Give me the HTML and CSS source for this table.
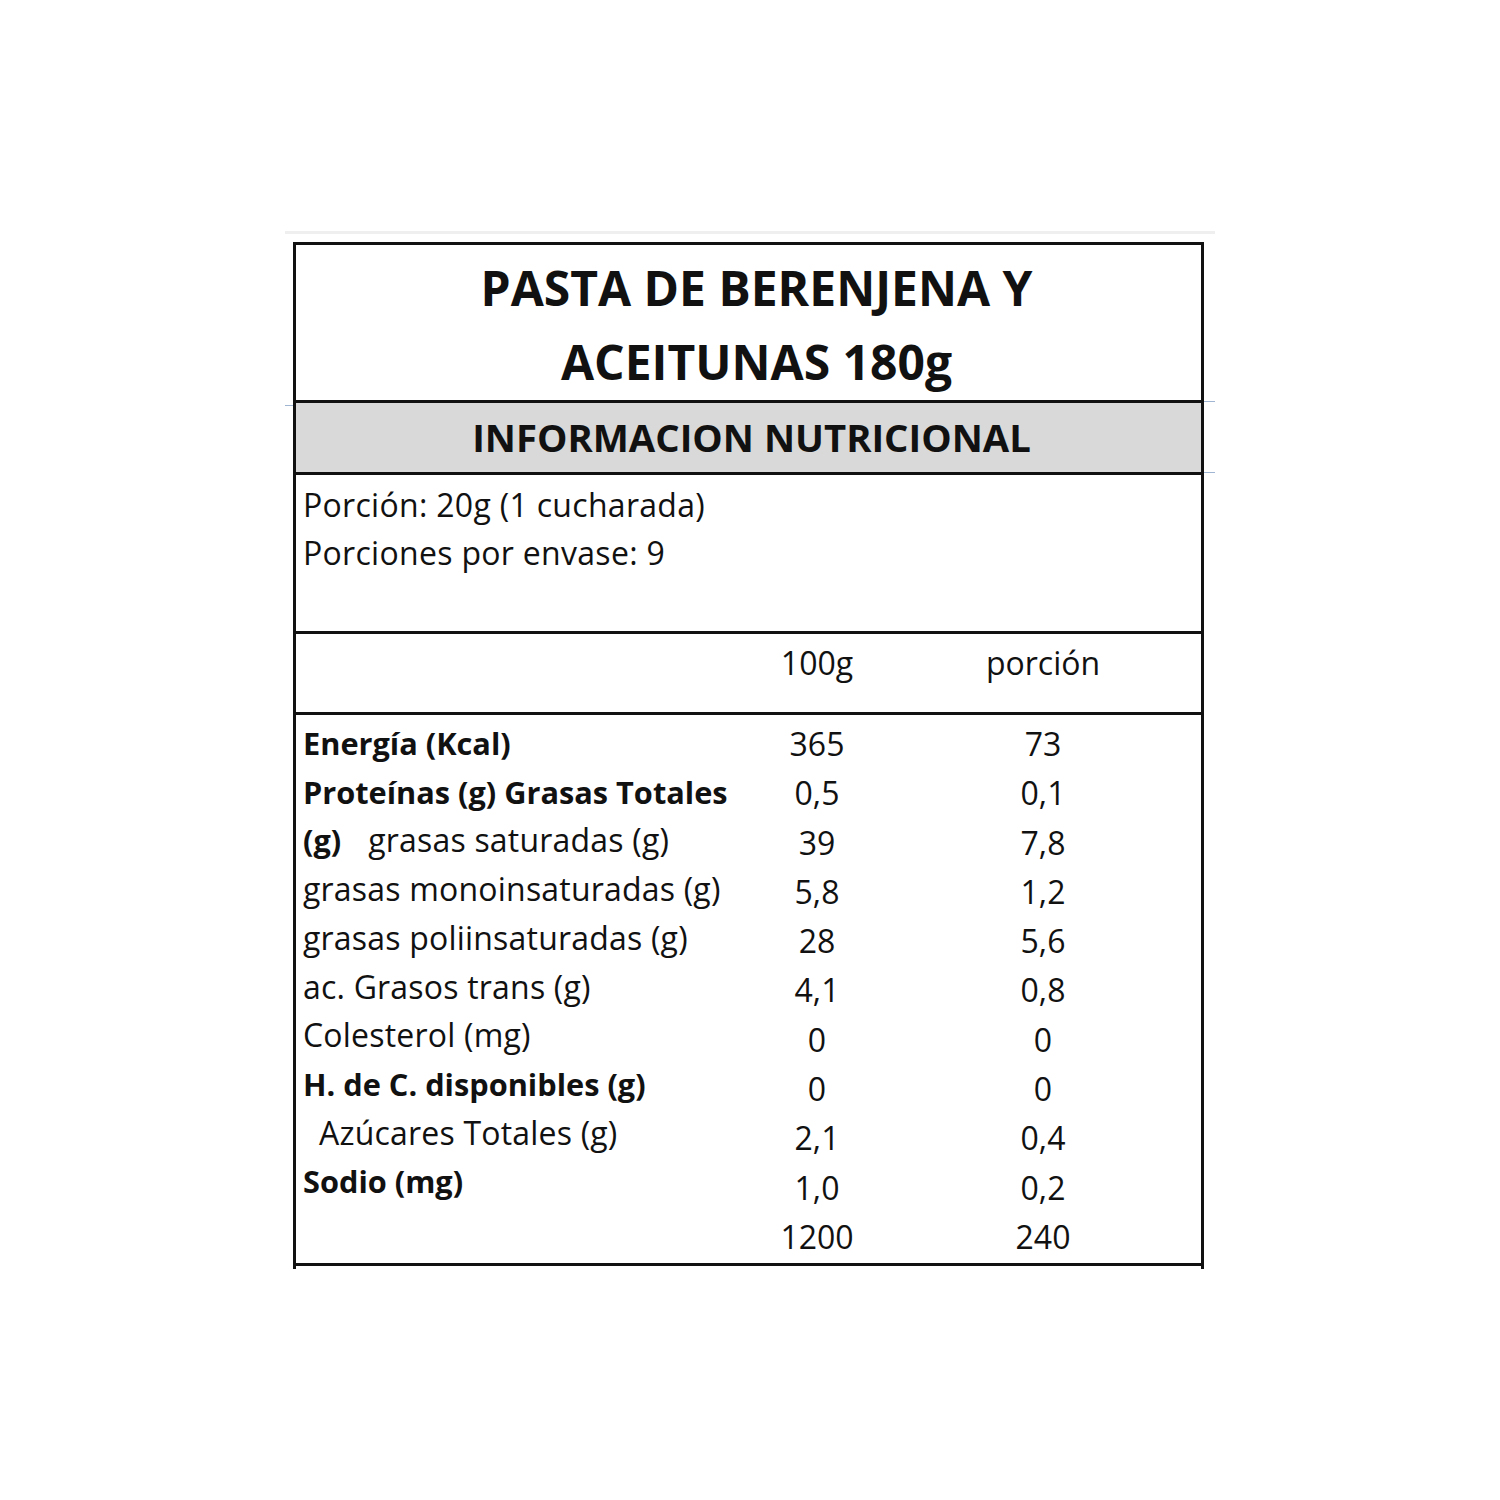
FILE: index.html
```html
<!DOCTYPE html>
<html lang="es">
<head>
<meta charset="utf-8">
<title>Pasta de berenjena y aceitunas 180g</title>
<link rel="stylesheet" href="styles.css">
</head>
<body>
<div class="page">
  <div class="topline"></div>
  <div class="label">
    <span class="tick tick-left"></span>
    <span class="tick tick-right1"></span>
    <span class="tick tick-right2"></span>
    <div class="title">PASTA DE BERENJENA Y<br>ACEITUNAS 180g</div>
    <div class="band">INFORMACION NUTRICIONAL</div>
    <div class="serving">
      <div>Porción: 20g (1 cucharada)</div>
      <div>Porciones por envase: 9</div>
    </div>
    <div class="head grid">
      <div></div>
      <div class="c">100g</div>
      <div></div>
      <div class="c">porción</div>
    </div>
    <div class="data grid">
      <div class="names">
        <div><b>Energía (Kcal)</b></div>
        <div><b>Proteínas (g) Grasas Totales</b></div>
        <div><b>(g)</b><span class="gap"></span>grasas saturadas (g)</div>
        <div>grasas monoinsaturadas (g)</div>
        <div>grasas poliinsaturadas (g)</div>
        <div>ac. Grasos trans (g)</div>
        <div>Colesterol (mg)</div>
        <div><b>H. de C. disponibles (g)</b></div>
        <div class="indent">Azúcares Totales (g)</div>
        <div><b>Sodio (mg)</b></div>
      </div>
      <div class="vals c">
        <div>365</div><div>0,5</div><div>39</div><div>5,8</div><div>28</div><div>4,1</div><div>0</div><div>0</div><div>2,1</div><div>1,0</div><div>1200</div>
      </div>
      <div></div>
      <div class="vals c">
        <div>73</div><div>0,1</div><div>7,8</div><div>1,2</div><div>5,6</div><div>0,8</div><div>0</div><div>0</div><div>0,4</div><div>0,2</div><div>240</div>
      </div>
    </div>
  </div>
</div>
</body>
</html>
```
FILE: styles.css
```css
html, body {
  margin: 0;
  padding: 0;
  background: #ffffff;
}
body {
  font-family: "Open Sans", "Noto Sans", sans-serif;
  color: #111111;
}
.page {
  padding: 231px 0 0 285px;
}
.topline {
  width: 930px;
  height: 3px;
  background: #efefef;
  margin-bottom: 8px;
}
.label {
  position: relative;
  margin-left: 8px;
  width: 911px;
  box-sizing: border-box;
  border: 3px solid #111;
  border-bottom: none;
  padding-bottom: 3px;
}
.tick {
  position: absolute;
  height: 1px;
  background: #9fb5d2;
}
.tick-left { left: -11px; width: 8px; top: 160px; }
.tick-right1 { right: -14px; width: 11px; top: 156px; }
.tick-right2 { right: -14px; width: 11px; top: 227px; }
.title {
  height: 149px;
  padding: 6px 0 0 16px;
  text-align: center;
  font-weight: 700;
  font-size: 48px;
  line-height: 74px;
  border-bottom: 3px solid #111;
}
.band {
  height: 69px;
  padding-left: 6px;
  background: #d9d9d9;
  text-align: center;
  font-weight: 700;
  font-size: 38.3px;
  line-height: 69px;
  border-bottom: 3px solid #111;
}
.serving {
  height: 150px;
  padding: 6px 0 0 7px;
  font-size: 32px;
  letter-spacing: 0.3px;
  line-height: 48px;
  border-bottom: 3px solid #111;
}
.grid {
  display: grid;
  grid-template-columns: 441px 160px 66px 160px;
  font-size: 32px;
}
.c { text-align: center; }
.head {
  height: 73px;
  padding-top: 5px;
  line-height: 48px;
  border-bottom: 3px solid #111;
}
.data {
  padding-top: 4px;
  height: 544px;
  border-bottom: 3px solid #111;
}
.names {
  padding-left: 7px;
  line-height: 48.7px;
  white-space: nowrap;
  letter-spacing: 0.2px;
}
.names b {
  font-weight: 700;
  font-size: 0.96em;
  letter-spacing: 0;
}
.gap { display: inline-block; width: 27px; }
.indent { padding-left: 16px; }
.vals {
  line-height: 49.3px;
}
```
